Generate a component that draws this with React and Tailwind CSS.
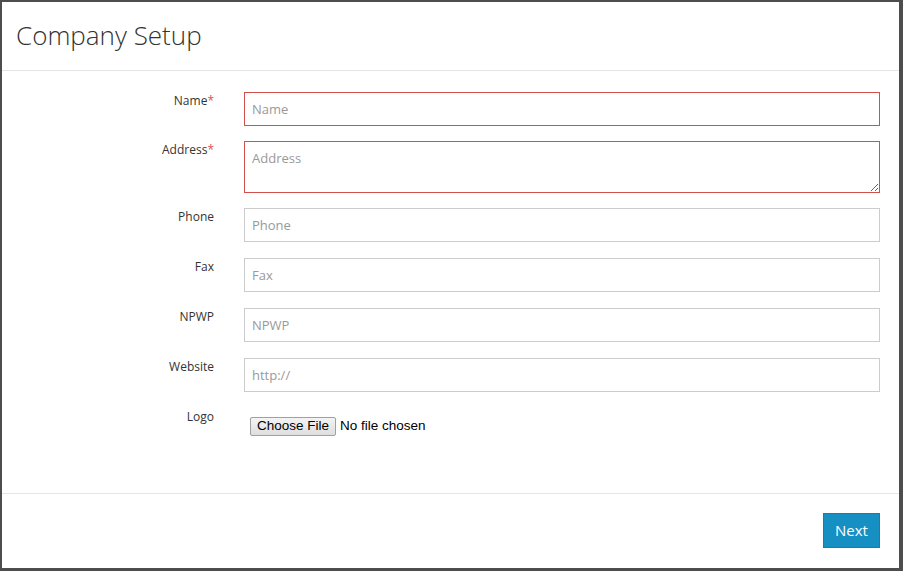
import React from 'react';

const fields = [
  { label: 'Name', placeholder: 'Name', required: true },
  { label: 'Address', placeholder: 'Address', required: true, textarea: true },
  { label: 'Phone', placeholder: 'Phone' },
  { label: 'Fax', placeholder: 'Fax' },
  { label: 'NPWP', placeholder: 'NPWP' },
  { label: 'Website', placeholder: 'http://' },
];

const CompanySetup = () => {
  return (
    <div className="w-[903px] h-[571px] bg-[#4d4d4d] pt-[2px] pl-[2px] pr-[4px] pb-[3px] font-['Open_Sans',sans-serif]">
      <div className="flex flex-col h-full bg-white">
        {/* header */}
        <div className="h-[69px] border-b border-[#e5e5e5] pl-[14px] flex items-center">
          <h1 className="text-[26px] font-light text-[#333] leading-none -mt-[2px]">Company Setup</h1>
        </div>

        {/* form */}
        <div className="flex-1 pt-[21px] pl-[15px] pr-[19px]">
          {fields.map((f) => (
            <div key={f.label} className={`flex gap-[30px] ${f.required ? 'mb-[15px]' : 'mb-[16px]'}`}>
              <label className="w-[197px] text-right text-[12px] leading-[17px] text-[#333]">
                {f.label}
                {f.required && <span className="text-[#d9534f]">*</span>}
              </label>
              {f.textarea ? (
                <textarea
                  placeholder={f.placeholder}
                  className={`flex-1 h-[52px] border px-[7px] py-[7px] text-[13px] text-[#555] placeholder:text-[#999] outline-none ${f.required ? 'border-[#d2504c]' : 'border-[#ccc]'}`}
                />
              ) : (
                <input
                  placeholder={f.placeholder}
                  className={`flex-1 h-[34px] border px-[7px] text-[13px] text-[#555] placeholder:text-[#999] outline-none ${f.required ? 'border-[#d2504c]' : 'border-[#ccc]'}`}
                />
              )}
            </div>
          ))}
          <div className="flex gap-[30px]">
            <label className="w-[197px] text-right text-[12px] leading-[17px] text-[#333]">Logo</label>
            <div className="flex items-center pl-[6px] pt-[8px] font-['Liberation_Sans',Arial,sans-serif] text-[13.5px] text-black">
              <span className="h-[19px] px-[6px] flex items-center border border-[#a0a0a0] rounded-[2px] bg-gradient-to-b from-[#f4f4f4] to-[#dedede]">
                Choose File
              </span>
              <span className="ml-[4px]">No file chosen</span>
            </div>
          </div>
        </div>

        {/* footer */}
        <div className="border-t border-[#e5e5e5] h-[75px] pt-[19px] pr-[19px] flex justify-end items-start">
          <button className="w-[57px] h-[35px] bg-[#168fc3] border border-[#137fae] text-white text-[15px]">
            Next
          </button>
        </div>
      </div>
    </div>
  );
};

export default function App() {
  return <CompanySetup />;
}
